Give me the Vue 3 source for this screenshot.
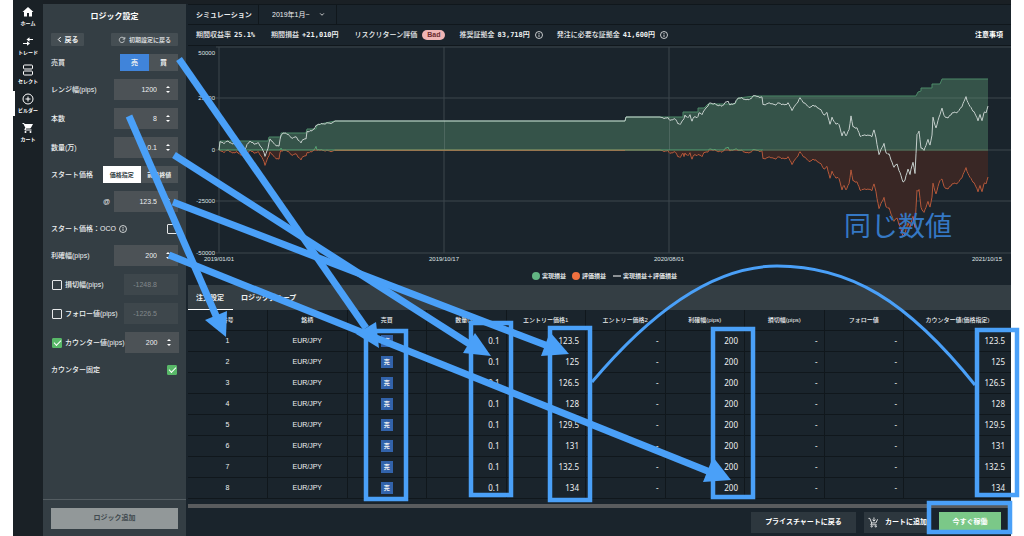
<script setup>
import { ref } from 'vue'

const nav = [
  { id: 'home', label: 'ホーム' },
  { id: 'trade', label: 'トレード' },
  { id: 'select', label: 'セレクト' },
  { id: 'builder', label: 'ビルダー', active: true },
  { id: 'cart', label: 'カート' },
]

const range = ref('1200')
const count = ref('8')
const lots = ref('0.1')
const start = ref('123.5')
const profit = ref('200')
const loss = ref('-1248.8')
const follow = ref('-1226.5')
const counter = ref('200')
const oco = ref(false)
const useLoss = ref(false)
const useFollow = ref(false)
const useCounter = ref(true)
const fixCounter = ref(true)

const headers = ['番号', '銘柄', '売買', '数量(万)', 'エントリー価格1', 'エントリー価格2', '利確幅(pips)', '損切幅(pips)', 'フォロー値', 'カウンター値(価格指定)']
const prices = ['123.5', '125', '126.5', '128', '129.5', '131', '132.5', '134']

const gridY = [
  { y: 1, ty: 9, label: '50000' },
  { y: 52, ty: 54, label: '25000' },
  { y: 104, ty: 106, label: '0' },
  { y: 155, ty: 157, label: '-25000' },
  { y: 207, ty: 209, label: '-50000' },
]
const gridX = [
  { x: 31, tx: 31, label: '2019/01/01' },
  { x: 256, tx: 256, label: '2019/10/17' },
  { x: 481, tx: 481, label: '2020/08/01' },
]

/* Profit curves in chart units; ZERO is the height of the zero line. */
const ZERO = 104
const realised = [[31, 104], [32, 95], [80, 95], [81, 91], [93, 91], [93, 87], [118, 87], [119, 83], [128, 83], [129, 79], [137, 77], [147, 75], [437, 75], [438, 71], [495, 71], [495, 66], [510, 66], [510, 62], [516, 62], [520, 58], [547, 58], [550, 52], [567, 50], [728, 50], [730, 46], [733, 45], [733, 42], [744, 42], [744, 38], [752, 38], [754, 33], [800, 33]]
const total = [[31, 104], [32, 96], [36, 97], [40, 95], [44, 98], [48, 97], [52, 99], [57, 103], [59, 99], [62, 95], [66, 98], [70, 97], [74, 102], [77, 110], [80, 102], [82, 93], [84, 95], [87, 99], [91, 100], [93, 89], [95, 87], [100, 88], [103, 92], [108, 91], [113, 97], [115, 93], [118, 93], [119, 86], [121, 85], [124, 85], [128, 80], [131, 78], [135, 78], [140, 77], [144, 77], [147, 75], [437, 75], [438, 71], [472, 71], [476, 72], [480, 72], [482, 74], [485, 74], [487, 72], [490, 78], [492, 78], [496, 73], [497, 69], [500, 72], [502, 69], [504, 75], [506, 71], [510, 71], [511, 67], [514, 68], [518, 62], [522, 57], [527, 58], [529, 59], [534, 60], [537, 57], [540, 55], [542, 59], [547, 57], [550, 52], [553, 52], [559, 54], [564, 52], [566, 49], [570, 51], [574, 51], [575, 59], [582, 57], [587, 59], [590, 57], [597, 59], [600, 57], [604, 64], [609, 57], [612, 52], [616, 57], [620, 60], [622, 62], [625, 59], [632, 63], [636, 69], [639, 67], [642, 78], [644, 72], [648, 78], [651, 78], [654, 90], [656, 85], [658, 90], [661, 84], [663, 70], [665, 81], [669, 82], [672, 90], [678, 89], [684, 90], [686, 84], [688, 92], [691, 109], [694, 101], [696, 98], [698, 107], [701, 108], [703, 114], [706, 121], [709, 118], [712, 127], [715, 136], [717, 134], [720, 123], [722, 128], [725, 116], [727, 127], [729, 89], [731, 85], [733, 102], [736, 104], [740, 94], [742, 99], [744, 89], [745, 72], [748, 82], [752, 68], [754, 62], [756, 70], [760, 72], [764, 67], [770, 66], [774, 60], [778, 51], [781, 59], [786, 66], [790, 74], [792, 69], [794, 75], [796, 66], [798, 67], [800, 60]]

function at(points, x) {
  for (let i = 1; i < points.length; i++) {
    const [x0, y0] = points[i - 1]
    const [x1, y1] = points[i]
    if (x <= x1) return x1 === x0 ? y1 : y0 + ((y1 - y0) * (x - x0)) / (x1 - x0)
  }
  return points[points.length - 1][1]
}
const samples = []
for (let x = 31; x <= 800; x++) {
  const calm = (x > 143 && x < 476)
  const wobble = calm ? 0 : Math.sin(x * 2.3) * 0.4 + Math.sin(x * 5.1) * 0.4
  const y = x === 31 ? ZERO : at(total, x) + wobble
  samples.push([x, y, ZERO + y - at(realised, x)])
}
const path = (pts) => 'M' + pts.map(([x, y]) => x + ' ' + y.toFixed(1)).join('L')
const totalLine = path(samples.map((s) => [s[0], s[1]]))
const lossLine = path(samples.map((s) => [s[0], Math.max(ZERO, s[2])]))
const gainLine = path(samples.map((s) => [s[0], Math.max(ZERO - 4, Math.min(ZERO, s[2]))]))
const realisedLine = path(realised)

const arrows = [
  { x: 179, y: 59, bx: 366, by: 328, head: '356,334 376,322 379,348' },
  { x: 129, y: 116, bx: 217, by: 318, head: '205,320 227,311 226,337' },
  { x: 174, y: 155, bx: 471, by: 345, head: '463,353 475,333 491,356' },
  { x: 173, y: 202, bx: 548, by: 346, head: '541,356 550,332 569,354' },
  { x: 169, y: 255, bx: 710, by: 472, head: '703,482 713,457 731,480' },
]
const boxes = [
  [366, 331, 40, 168],
  [471, 323, 40, 172],
  [550, 328, 40, 172],
  [713, 329, 40, 168],
  [977, 330, 40, 165],
  [929, 503, 81, 29],
]
</script>

<template>
  <div class="page">
    <div class="app">
      <nav class="rail">
        <a v-for="n in nav" :key="n.id" href="#" :class="{ active: n.active }">
          <svg viewBox="0 0 24 24" width="12" height="12" aria-hidden="true">
            <path v-if="n.id === 'home'" fill="#fff" d="M10 21v-7h4v7h6v-9h3L12 2 1 12h3v9z" />
            <g v-else-if="n.id === 'trade'" fill="none" stroke="#fff" stroke-width="2">
              <path d="M2 17h9M12 9h10" />
              <path fill="#fff" stroke="none" d="M10 12.500l6 4.500-6 4.500zM15 4.500v9L9 9z" />
            </g>
            <g v-else-if="n.id === 'select'" fill="none" stroke="#fff" stroke-width="2">
              <rect x="3" y="2" width="18" height="8" rx="2" />
              <rect x="3" y="14" width="18" height="8" rx="2" />
            </g>
            <g v-else-if="n.id === 'builder'" fill="none" stroke="#fff" stroke-width="2">
              <circle cx="12" cy="12" r="10" />
              <path d="M12 7v10M7 12h10" />
            </g>
            <path v-else fill="#fff" d="M7 18a2 2 0 1 0 0 4 2 2 0 0 0 0-4zM1 2v2h2l3.600 7.600L5 14c-.7 1.300.3 3 2 3h12v-2H7.400l1.100-2h7.500c.7 0 1.400-.4 1.700-1L22 4H5.200l-.9-2zM17 18a2 2 0 1 0 0 4 2 2 0 0 0 0-4z" />
          </svg>
          <span>{{ n.label }}</span>
        </a>
      </nav>

      <aside class="side">
        <h1>ロジック設定</h1>
        <form class="form" @submit.prevent>
          <div class="row h13">
            <button type="button" class="small back">
              <svg viewBox="0 0 6 8" width="5" height="7" fill="none" stroke="#fff" stroke-width="1.200"><path d="M4.500 1L1.500 4l3 3" /></svg>
              戻る
            </button>
            <button type="button" class="small reset">
              <svg viewBox="0 0 24 24" width="8" height="8" fill="none" stroke="#d5d8da" stroke-width="2.500"><path d="M19.500 14A8 8 0 1 1 18 6.500L20 9M20.500 3v6.500H14" /></svg>
              初期設定に戻る
            </button>
          </div>
          <div class="row h17">
            <span>売買</span>
            <div class="pair wide">
              <button type="button" class="sell">売</button>
              <button type="button">買</button>
            </div>
          </div>
          <div class="row h21"><label for="range">レンジ幅(pips)</label>
            <div class="num"><input id="range" v-model="range"><i class="step"></i></div></div>
          <div class="row h21"><label for="count">本数</label>
            <div class="num"><input id="count" v-model="count"><i class="step"></i></div></div>
          <div class="row h21"><label for="lots">数量(万)</label>
            <div class="num"><input id="lots" v-model="lots"><i class="step"></i></div></div>
          <div class="row h17">
            <span>スタート価格</span>
            <div class="pair price">
              <button type="button" class="on">価格指定</button>
              <button type="button">前日終値</button>
            </div>
          </div>
          <div class="row h21 end"><label for="start">@</label>
            <div class="num"><input id="start" v-model="start"><i class="step"></i></div></div>
          <div class="row h17 box-end">
            <label for="oco">スタート価格：OCO
              <svg viewBox="0 0 16 16" width="8" height="8" fill="none" stroke="#fff" stroke-width="1.500"><circle cx="8" cy="8" r="7" /><path d="M8 7v5M8 4v2" /></svg>
            </label>
            <input id="oco" v-model="oco" type="checkbox">
          </div>
          <div class="row h21"><label for="profit">利確幅(pips)</label>
            <div class="num"><input id="profit" v-model="profit"><i class="step"></i></div></div>
          <div class="row h21">
            <label class="tick"><input v-model="useLoss" type="checkbox">損切幅(pips)</label>
            <div class="num narrow off"><input v-model="loss" aria-label="損切幅(pips)" disabled></div></div>
          <div class="row h21">
            <label class="tick"><input v-model="useFollow" type="checkbox">フォロー値(pips)</label>
            <div class="num narrow off"><input v-model="follow" aria-label="フォロー値(pips)" disabled></div></div>
          <div class="row h21">
            <label class="tick"><input v-model="useCounter" type="checkbox">カウンター値(pips)</label>
            <div class="num narrow"><input v-model="counter" aria-label="カウンター値(pips)"><i class="step"></i></div></div>
          <div class="row h17 box-end"><label for="fix">カウンター固定</label>
            <input id="fix" v-model="fixCounter" type="checkbox"></div>
        </form>
        <div class="side-foot"><button type="button">ロジック追加</button></div>
      </aside>

      <main class="main">
        <header class="top">
          <h2>シミュレーション</h2>
          <div class="period">
            <select aria-label="期間"><option>2019年1月~</option></select>
            <svg viewBox="0 0 8 6" width="6" height="5" fill="none" stroke="#ddd" stroke-width="1.200"><path d="M1.500 1.500L4 4l2.500-2.500" /></svg>
          </div>
        </header>
        <section class="stats">
          <p>期間収益率 <b>25.1%</b></p>
          <p>期間損益 <b>+21,010円</b></p>
          <p>リスクリターン評価 <em>Bad</em></p>
          <p>推奨証拠金 <b>83,718円</b>
            <svg viewBox="0 0 16 16" width="8" height="8" fill="none" stroke="#fff" stroke-width="1.500"><circle cx="8" cy="8" r="7" /><path d="M8 7v5M8 4v2" /></svg></p>
          <p>発注に必要な証拠金 <b>41,600円</b>
            <svg viewBox="0 0 16 16" width="8" height="8" fill="none" stroke="#fff" stroke-width="1.500"><circle cx="8" cy="8" r="7" /><path d="M8 7v5M8 4v2" /></svg></p>
          <a href="#">注意事項</a>
        </section>

        <svg class="chart" viewBox="0 0 823 239" role="img" aria-label="損益チャート">
          <g stroke="#3c464c" stroke-width="1">
            <line v-for="g in gridX" :key="g.label" :x1="g.x" :x2="g.x" y1="1" y2="207" />
            <line v-for="g in gridY" :key="g.label" x1="28" x2="823" :y1="g.y" :y2="g.y" />
          </g>
          <path :d="realisedLine + 'V104H31Z'" fill="#355349" />
          <path :d="realisedLine" fill="none" stroke="#4c8a68" />
          <path :d="lossLine + 'V104H31Z'" fill="#392725" />
          <g stroke="#fff" stroke-opacity="0.120">
            <path d="M256.500 75V104M481.500 71V104M567 52H800" fill="none" />
          </g>
          <path :d="lossLine" fill="none" stroke="#b5583a" />
          <path :d="gainLine" fill="none" stroke="#57a274" />
          <path d="M147 104.500H437" stroke="#98764f" />
          <path d="M575 104H800" stroke="#4a4a44" />
          <path :d="totalLine" fill="none" stroke="#c5cfcc" />
          <g class="axis">
            <text v-for="g in gridY" :key="g.label" x="27" :y="g.ty" text-anchor="end">{{ g.label }}</text>
            <text v-for="g in gridX" :key="g.label" :x="g.tx" y="215" text-anchor="middle">{{ g.label }}</text>
            <text x="814" y="215" text-anchor="end">2021/10/15</text>
          </g>
          <g class="legend">
            <circle cx="348" cy="230" r="4" fill="#62b583" />
            <text x="354" y="232">実現損益</text>
            <circle cx="388" cy="230" r="4" fill="#f0703f" />
            <text x="394" y="232">評価損益</text>
            <path d="M425 230h8" stroke="#fff" />
            <text x="435" y="232">実現損益＋評価損益</text>
          </g>
        </svg>

        <div class="tabs">
          <button type="button" class="current">注文設定</button>
          <button type="button">ロジックグループ</button>
        </div>

        <table>
          <colgroup><col v-for="i in 9" :key="i" class="c"><col></colgroup>
          <thead><tr><th v-for="h in headers" :key="h">{{ h }}</th></tr></thead>
          <tbody>
            <tr v-for="(p, i) in prices" :key="p">
              <td class="mid">{{ i + 1 }}</td>
              <td class="mid">EUR/JPY</td>
              <td class="mid"><span class="badge">売</span></td>
              <td>0.1</td>
              <td>{{ p }}</td>
              <td>-</td>
              <td>200</td>
              <td>-</td>
              <td>-</td>
              <td>{{ p }}</td>
            </tr>
          </tbody>
        </table>
        <div class="scroll"></div>
        <footer class="foot">
          <button type="button" class="wide">プライスチャートに戻る</button>
          <button type="button" class="cart">
            <svg viewBox="0 0 24 24" width="11" height="11" fill="none" stroke="#fff" stroke-width="1.800"><path d="M1 3h3l4 10h9l4-8M8 13l-2 4h13M13 1v8M9.500 5.500L13 9l3.500-3.500" /><circle cx="8" cy="20.500" r="1.500" /><circle cx="17" cy="20.500" r="1.500" /></svg>
            カートに追加
          </button>
          <button type="button" class="go">今すぐ稼働</button>
        </footer>
      </main>
    </div>

    <svg class="notes" viewBox="0 0 1024 536" aria-hidden="true">
      <g fill="none" stroke="#4aa0f8">
        <path d="M592 382C640 325 705 266 777 266S907 300 975 385" stroke-width="3" />
        <rect v-for="(b, i) in boxes" :key="i" :x="b[0]" :y="b[1]" :width="b[2]" :height="b[3]" stroke-width="4.500" />
        <line v-for="a in arrows" :key="a.head" :x1="a.x" :y1="a.y" :x2="a.bx" :y2="a.by" stroke-width="7" />
      </g>
      <polygon v-for="a in arrows" :key="a.head" :points="a.head" fill="#4aa0f8" />
      <text x="844" y="236">同じ数値</text>
    </svg>
  </div>
</template>

<style>
body { background: #fff; }
</style>

<style scoped>
.page {
  position: relative;
  overflow: hidden;
  font-family: "Liberation Sans", "Noto Sans CJK JP", sans-serif;
  font-size: 7px;
  line-height: 10px;
  color: #eef0f1;
}
.page * { box-sizing: border-box; }
.app {
  display: flex;
  min-height: 100vh;
  margin: 0 13px;
  background: #1a242c;
  box-shadow: inset 0 4px 0 #1a2025;
}
h1, h2, p { margin: 0; }
button, input, select { font: inherit; color: inherit; border: 0; padding: 0; margin: 0; }
button {
  display: flex;
  align-items: center;
  justify-content: center;
  background: #3f484d;
  font-weight: 700;
  white-space: nowrap;
}
.rail { width: 30px; flex: none; padding-top: 4px; background: #1a2126; }
.rail a {
  display: flex;
  flex-direction: column;
  align-items: center;
  height: 29px;
  padding-top: 2px;
  gap: 1px;
  color: #fff;
  font-size: 5px;
  font-weight: 700;
  line-height: 8px;
  text-decoration: none;
  white-space: nowrap;
}
.rail a.active { background: linear-gradient(#fff, #fff) left top / 2px 25px no-repeat; }
.side {
  display: flex;
  flex-direction: column;
  flex: none;
  width: 143px;
  margin-top: 4px;
  background: #343e44;
}
.side h1 { font-size: 8px; line-height: 25px; text-align: center; color: #fff; }
.form { display: flex; flex-direction: column; flex: 1; gap: 8px; padding: 4px 8px; font-weight: 500; }
.row { display: flex; align-items: center; justify-content: space-between; white-space: nowrap; }
.h13 { height: 13px; }
.h17 { height: 17px; }
.h21 { height: 21px; }
.end { justify-content: flex-end; gap: 4px; }
.small { height: 13px; background: #454e53; border-radius: 1px; }
.back { width: 33px; gap: 3px; }
.reset { width: 67px; gap: 3px; font-size: 6px; color: #d5d8da; }
.pair { display: flex; height: 17px; }
.pair button { flex: 1; background: #4c5357; }
.pair.wide { width: 58px; }
.pair.price { width: 75px; font-size: 6px; }
.pair .sell { background: #4084da; }
.pair .on { background: #fff; color: #343e44; }
.num { display: flex; align-items: center; width: 64px; height: 21px; padding-right: 6px; background: #4c5256; }
.num.narrow { width: 54px; }
.num input { flex: 1; min-width: 0; height: 21px; padding-right: 7px; background: none; text-align: right; }
.num.off { background: #3e474c; color: #82888b; }
.num.off input { padding-right: 15px; }
.step { display: flex; flex-direction: column; gap: 3px; width: 8px; align-items: center; }
.step::before, .step::after { content: ""; border: 2px solid transparent; }
.step::before { border-top: 0; border-bottom-color: #fff; }
.step::after { border-bottom: 0; border-top-color: #fff; }
label svg { vertical-align: -2px; margin-left: 1px; }
input[type="checkbox"] {
  appearance: none;
  display: flex;
  align-items: center;
  justify-content: center;
  flex: none;
  width: 10px;
  height: 10px;
  border: 1px solid #e6e8e9;
  border-radius: 1px;
}
input[type="checkbox"]:checked { background: #58b868; border-color: #58b868; }
input[type="checkbox"]:checked::after {
  content: "";
  width: 6px;
  height: 3px;
  border: solid #fff;
  border-width: 0 0 1px 1px;
  transform: translateY(-1px) rotate(-45deg);
}
.box-end { padding-right: 1px; }
.tick { display: flex; align-items: center; gap: 3px; padding-left: 1px; }
.side-foot { padding: 8px 8px 9px; border-top: 1px solid #545d62; }
.side-foot button { width: 100%; height: 21px; background: #929899; color: #414a4f; }
.main { flex: 1; min-width: 0; margin: 4px 0 0 2px; display: flex; flex-direction: column; }
.top { display: flex; height: 21px; border-top: 1px solid #10171c; border-bottom: 1px solid #10171c; }
.top h2 { width: 71px; padding-left: 8px; font-size: 7px; line-height: 20px; border-right: 1px solid #10171c; white-space: nowrap; }
.period { display: flex; align-items: center; width: 78px; padding-left: 13px; border-right: 1px solid #10171c; }
.period select { appearance: none; width: 47px; background: none; }
.stats { display: flex; align-items: center; gap: 16px; height: 21px; padding: 0 8px; border-bottom: 1px solid #10171c; white-space: nowrap; }
.stats p { display: flex; align-items: center; gap: 3px; font-size: 7px; font-weight: 500; }
.stats p:nth-child(n+3) { margin-right: -2px; }
.stats b { font-family: "DejaVu Sans Mono", "Noto Sans CJK JP", monospace; }
.stats svg { margin-left: 2px; }
.stats em { margin-left: 2px; padding: 0 5px; border-radius: 6px; background: #efb5b5; color: #6b2c30; font-style: normal; font-weight: 700; }
.stats a { margin-left: auto; color: #fff; font-weight: 700; text-decoration: none; }
.chart { display: block; width: 100%; }
.axis { font-size: 6px; fill: #dfe3e5; }
.legend { font-size: 6px; font-weight: 700; fill: #e3e6e8; }
.tabs { display: flex; height: 25px; background: #343e44; }
.tabs button { padding: 0 8px; background: none; }
.tabs .current { padding-right: 9px; box-shadow: inset 0 -1px 0 #fff; }
table { width: 100%; table-layout: fixed; border-collapse: collapse; }
.c { width: 9.660%; }
th, td { padding: 0 6px; border-bottom: 1px solid #10171c; border-right: 1px solid #10171c; white-space: nowrap; }
th:last-child, td:last-child { border-right: 0; }
th { height: 20px; font-size: 6px; font-weight: 500; text-align: center; }
td { height: 21px; text-align: right; font-family: "Noto Sans", "Noto Sans CJK JP", sans-serif; font-size: 8px; line-height: 10px; }
td.mid { text-align: center; font-family: "Liberation Sans", "Noto Sans CJK JP", sans-serif; font-size: 7px; }
.badge { display: inline-block; width: 12px; font-size: 6px; line-height: 12px; font-weight: 700; background: #3263ab; vertical-align: middle; }
.scroll { height: 4px; margin-top: 5px; background: #5a5c5e; }
.foot { display: flex; justify-content: flex-end; gap: 8px; padding: 4px 10px 5px 0; }
.foot button { height: 21px; background: #2d373e; color: #fff; }
.foot .wide { width: 105px; }
.foot .cart { width: 67px; gap: 6px; }
.foot .go { width: 62px; background: #7bc888; }
.notes { position: absolute; top: 0; left: 0; width: 100%; pointer-events: none; }
.notes text { font-size: 27px; fill: #3578c4; }
</style>
